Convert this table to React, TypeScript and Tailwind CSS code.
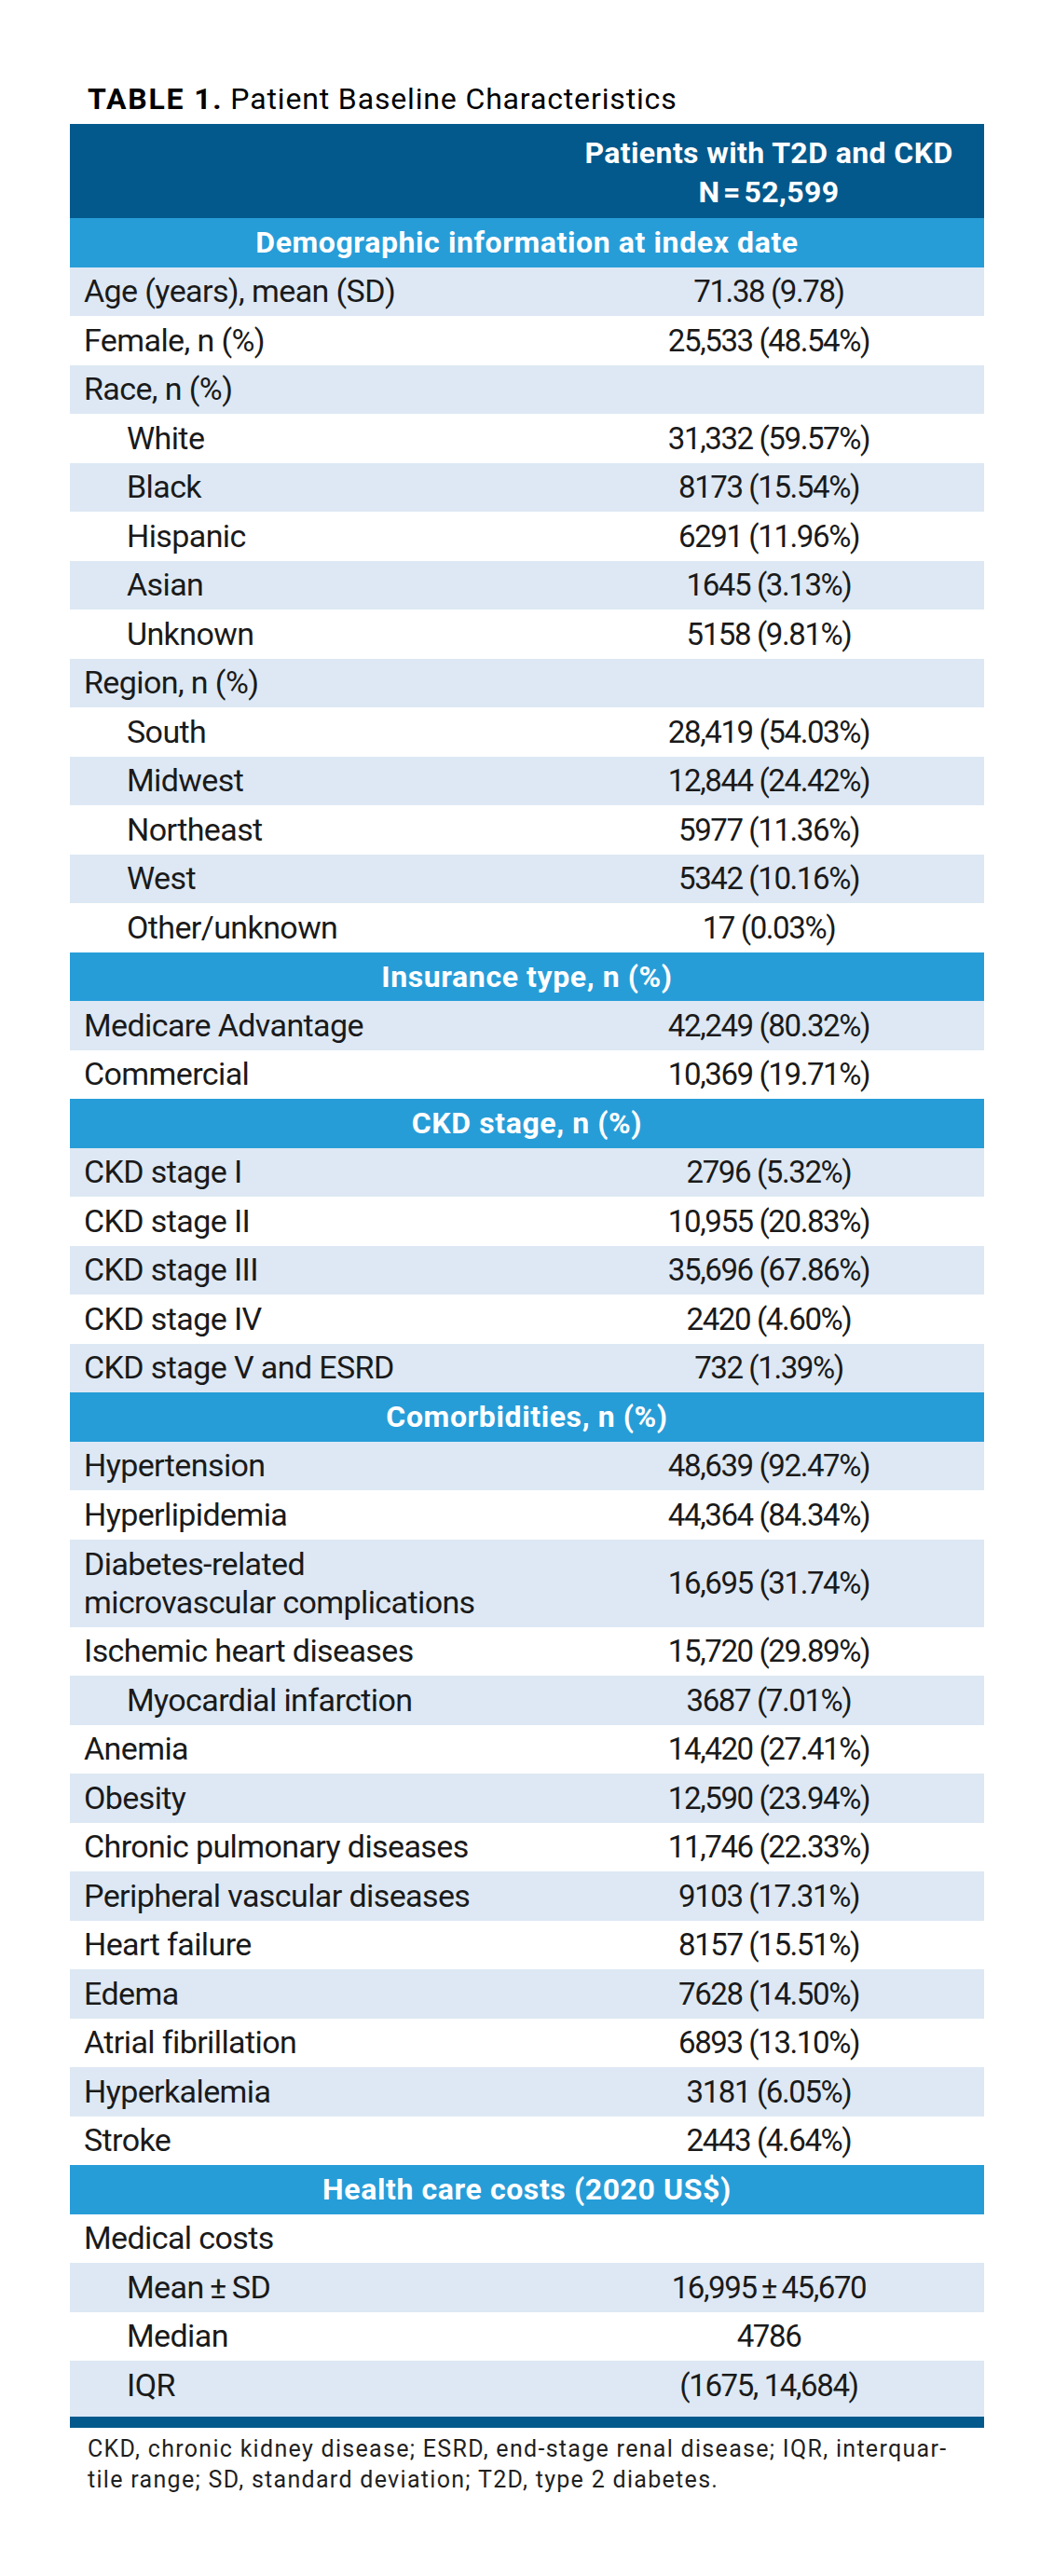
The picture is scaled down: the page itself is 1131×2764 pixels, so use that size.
type Row = {
  label: string;
  value?: string;
  shaded: boolean;
  indent?: boolean;
  double?: boolean;
  last?: boolean;
};

type Section = { title: string; rows: Row[] };

const sections: Section[] = [
  {
    title: 'Demographic information at index date',
    rows: [
      { label: 'Age (years), mean (SD)', value: '71.38 (9.78)', shaded: true },
      { label: 'Female, n (%)', value: '25,533 (48.54%)', shaded: false },
      { label: 'Race, n (%)', shaded: true },
      { label: 'White', value: '31,332 (59.57%)', shaded: false, indent: true },
      { label: 'Black', value: '8173 (15.54%)', shaded: true, indent: true },
      { label: 'Hispanic', value: '6291 (11.96%)', shaded: false, indent: true },
      { label: 'Asian', value: '1645 (3.13%)', shaded: true, indent: true },
      { label: 'Unknown', value: '5158 (9.81%)', shaded: false, indent: true },
      { label: 'Region, n (%)', shaded: true },
      { label: 'South', value: '28,419 (54.03%)', shaded: false, indent: true },
      { label: 'Midwest', value: '12,844 (24.42%)', shaded: true, indent: true },
      { label: 'Northeast', value: '5977 (11.36%)', shaded: false, indent: true },
      { label: 'West', value: '5342 (10.16%)', shaded: true, indent: true },
      { label: 'Other/unknown', value: '17 (0.03%)', shaded: false, indent: true },
    ],
  },
  {
    title: 'Insurance type, n (%)',
    rows: [
      { label: 'Medicare Advantage', value: '42,249 (80.32%)', shaded: true },
      { label: 'Commercial', value: '10,369 (19.71%)', shaded: false },
    ],
  },
  {
    title: 'CKD stage, n (%)',
    rows: [
      { label: 'CKD stage I', value: '2796 (5.32%)', shaded: true },
      { label: 'CKD stage II', value: '10,955 (20.83%)', shaded: false },
      { label: 'CKD stage III', value: '35,696 (67.86%)', shaded: true },
      { label: 'CKD stage IV', value: '2420 (4.60%)', shaded: false },
      { label: 'CKD stage V and ESRD', value: '732 (1.39%)', shaded: true },
    ],
  },
  {
    title: 'Comorbidities, n (%)',
    rows: [
      { label: 'Hypertension', value: '48,639 (92.47%)', shaded: true },
      { label: 'Hyperlipidemia', value: '44,364 (84.34%)', shaded: false },
      { label: 'Diabetes-related\nmicrovascular complications', value: '16,695 (31.74%)', shaded: true, double: true },
      { label: 'Ischemic heart diseases', value: '15,720 (29.89%)', shaded: false },
      { label: 'Myocardial infarction', value: '3687 (7.01%)', shaded: true, indent: true },
      { label: 'Anemia', value: '14,420 (27.41%)', shaded: false },
      { label: 'Obesity', value: '12,590 (23.94%)', shaded: true },
      { label: 'Chronic pulmonary diseases', value: '11,746 (22.33%)', shaded: false },
      { label: 'Peripheral vascular diseases', value: '9103 (17.31%)', shaded: true },
      { label: 'Heart failure', value: '8157 (15.51%)', shaded: false },
      { label: 'Edema', value: '7628 (14.50%)', shaded: true },
      { label: 'Atrial fibrillation', value: '6893 (13.10%)', shaded: false },
      { label: 'Hyperkalemia', value: '3181 (6.05%)', shaded: true },
      { label: 'Stroke', value: '2443 (4.64%)', shaded: false },
    ],
  },
  {
    title: 'Health care costs (2020 US$)',
    rows: [
      { label: 'Medical costs', shaded: false },
      { label: 'Mean\u2009\u00b1\u2009SD', value: '16,995\u2009\u00b1\u200945,670', shaded: true, indent: true },
      { label: 'Median', value: '4786', shaded: false, indent: true },
      { label: 'IQR', value: '(1675, 14,684)', shaded: true, indent: true, last: true },
    ],
  },
];

function DataRow({ row }: { row: Row }) {
  const height = row.double ? 'h-[94px]' : row.last ? 'h-[59.5px] pb-[7px]' : 'h-[52.5px]';
  return (
    <div className={`grid grid-cols-[519px_462px] items-center ${height} ${row.shaded ? 'bg-[#dde8f4]' : 'bg-white'}`}>
      <div className={`whitespace-pre-line leading-[41px] ${row.indent ? 'pl-[61px]' : 'pl-[15px]'}`}>{row.label}</div>
      <div className="text-center text-[33px] leading-[41px] tracking-[-1.4px]">{row.value}</div>
    </div>
  );
}

export default function App() {
  return (
    <div className="min-h-[2764px] w-[1131px] bg-white pt-[90px] font-[Roboto,sans-serif] text-[#1a1a1a]">
      <h1 className="ml-[94px] h-[32px] text-[32px] leading-[32px] text-black">
        <span className="font-bold tracking-[1.8px]">TABLE 1.</span>{' '}
        <span className="tracking-[0.85px]">Patient Baseline Characteristics</span>
      </h1>

      <div className="ml-[75px] mt-[11px] w-[981px] text-[34px] tracking-[-0.6px]">
        <div className="grid h-[101px] grid-cols-[519px_462px] items-center bg-[#03598c] pt-[3px] text-[32px] font-bold leading-[42px] tracking-[0.4px] text-white">
          <div />
          <div className="text-center">
            Patients with T2D and CKD
            <br />
            N&#8202;=&#8202;52,599
          </div>
        </div>

        {sections.map((section) => (
          <div key={section.title}>
            <div className="flex h-[52.5px] items-center justify-center bg-[#279dd8] text-[32px] font-bold tracking-[0.6px] text-white">
              {section.title}
            </div>
            {section.rows.map((row) => (
              <DataRow key={row.label} row={row} />
            ))}
          </div>
        ))}

        <div className="h-[12px] bg-[#03598c]" />
      </div>

      <p className="ml-[94px] mt-[6px] text-[25px] leading-[33px] tracking-[1.3px] text-[#1f1f1f]">
        CKD, chronic kidney disease; ESRD, end-stage renal disease; IQR, interquar-
        <br />
        tile range; SD, standard deviation; T2D, type 2 diabetes.
      </p>
    </div>
  );
}
